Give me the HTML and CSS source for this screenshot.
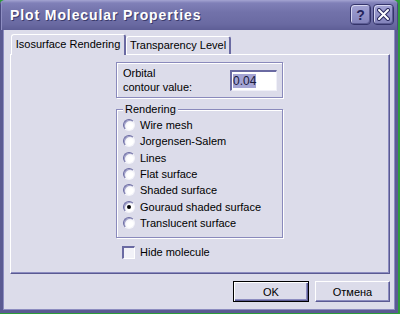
FILE: index.html
```html
<!DOCTYPE html>
<html lang="en">

<head>
    <meta charset="UTF-8">
    <title>Plot Molecular Properties</title>
    <link rel="stylesheet" href="styles.css">
</head>

<body>
    <div class="window">
        <div class="titlebar">
            <span class="title">Plot Molecular Properties</span>
            <div class="title-buttons">
                <span class="tbtn help">?</span>
                <span class="tbtn close">
                    <svg width="13" height="13" viewBox="0 0 13 13">
                        <path d="M2 2 L11 11 M11 2 L2 11" stroke="#2a2a5e" stroke-width="4" stroke-linecap="round" />
                        <path d="M2 2 L11 11 M11 2 L2 11" stroke="#fff" stroke-width="2" stroke-linecap="round" />
                    </svg>
                </span>
            </div>
        </div>

        <div class="client">
            <div class="tabs">
                <div class="tab active">Isosurface Rendering</div>
                <div class="tab">Transparency Level</div>
            </div>

            <div class="panel">
                <div class="orbital">
                    <div class="orbital-label">Orbital<br>contour value:</div>
                    <div class="input"><span class="sel">0.04</span></div>
                </div>

                <fieldset class="rendering">
                    <legend>Rendering</legend>
                    <div class="option"><span class="radio"></span>Wire mesh</div>
                    <div class="option"><span class="radio"></span>Jorgensen-Salem</div>
                    <div class="option"><span class="radio"></span>Lines</div>
                    <div class="option"><span class="radio"></span>Flat surface</div>
                    <div class="option"><span class="radio"></span>Shaded surface</div>
                    <div class="option"><span class="radio checked"></span>Gouraud shaded surface</div>
                    <div class="option"><span class="radio"></span>Translucent surface</div>
                </fieldset>

                <div class="check-row"><span class="checkbox"></span>Hide molecule</div>
            </div>

            <div class="buttons">
                <button class="btn default">OK</button>
                <button class="btn">Отмена</button>
            </div>
        </div>
    </div>
</body>

</html>
```

FILE: styles.css
```css
* {
    margin: 0;
    padding: 0;
    box-sizing: border-box;
}

body {
    background: #2e9c3a;
    font-family: 'Liberation Sans', Arial, sans-serif;
    font-size: 11px;
    color: #000;
}

.window {
    width: 398px;
    height: 313px;
    display: flex;
    flex-direction: column;
    border-radius: 5px 5px 0 0;
    overflow: hidden;
}

/* Title bar */
.titlebar {
    height: 30px;
    flex: none;
    display: flex;
    align-items: flex-start;
    justify-content: space-between;
    padding: 4px 4px 0 10px;
    background: linear-gradient(#a4a4d2 0, #8080b8 3px, #7272aa 40%, #6a6aa2 80%, #5e5e96 100%);
    box-shadow: inset 1px 0 0 #4a4a80, inset 2px 0 0 #8e8ec2, inset -1px 0 0 #4a4a80;
}

.title {
    font-weight: bold;
    font-size: 14px;
    color: #fff;
    line-height: 22px;
    letter-spacing: 0.9px;
    text-shadow: 1px 1px 0 #3a3a6a;
}

.title-buttons {
    display: flex;
    gap: 2px;
}

.tbtn {
    width: 21px;
    height: 21px;
    display: flex;
    align-items: center;
    justify-content: center;
    border: 1px solid #34346a;
    border-radius: 4px;
    background: linear-gradient(#a2a2d4, #8282ba);
    box-shadow: inset 1px 1px 0 #d6d6f0, inset -1px -1px 0 #5c5c94;
}

.help {
    font-weight: bold;
    font-size: 14px;
    color: #24245a;
}

/* Client area */
.client {
    flex: 1;
    background: #dcdcea;
    border: 3px solid #5a5a92;
    border-top: none;
    box-shadow: inset 1px 0 0 #8c8cc0, inset -1px 0 0 #8c8cc0, inset 0 -1px 0 #8c8cc0;
    padding: 4px 5px 0 7px;
}

.tabs {
    display: flex;
    align-items: flex-end;
    height: 21px;
    margin-bottom: -1px;
    position: relative;
    z-index: 1;
}

.tab {
    height: 18px;
    line-height: 17px;
    text-align: center;
    background: #dcdcea;
    border-top: 1px solid #fff;
    border-left: 1px solid #fff;
    border-right: 2px solid #6a6aa2;
    border-radius: 3px 3px 0 0;
    width: 105px;
    margin-bottom: 1px;
}

.tab.active {
    height: 21px;
    width: 115px;
    margin-left: 1px;
    margin-bottom: 0;
    line-height: 19px;
}

.panel {
    height: 220px;
    border-top: 1px solid #fff;
    border-left: 1px solid #fff;
    border-right: 1px solid #5a5a92;
    border-bottom: 1px solid #5a5a92;
    box-shadow: inset -1px -1px 0 #8c8cc0;
    padding: 7px 0 0 105px;
}

/* Orbital contour value */
.orbital {
    width: 167px;
    height: 36px;
    display: flex;
    align-items: center;
    justify-content: space-between;
    padding: 0 5px 0 6px;
    border: 1px solid #8a8abc;
    box-shadow: inset 1px 1px 0 #fff, 1px 1px 0 #fff;
}

.orbital-label {
    line-height: 14px;
}

.input {
    width: 47px;
    height: 21px;
    background: #fff;
    border-top: 2px solid #6a6aa2;
    border-left: 2px solid #6a6aa2;
    border-right: 1px solid #f0f0f8;
    border-bottom: 1px solid #f0f0f8;
    padding: 2px 0 0 1px;
    line-height: 14px;
    font-size: 12px;
}

.sel {
    background: #a4a4d4;
    color: #1a1a3a;
}

/* Rendering group */
.rendering {
    width: 167px;
    height: 136px;
    margin-top: 4px;
    padding: 1px 0 5px 6px;
    border: 1px solid #8a8abc;
    box-shadow: inset 1px 1px 0 #fff, 1px 1px 0 #fff;
}

.rendering legend {
    padding: 0 2px;
    line-height: 14px;
    background: #dcdcea;
}

.option {
    height: 16.33px;
    display: flex;
    align-items: center;
}

.radio {
    width: 12px;
    height: 12px;
    margin-right: 5px;
    border-radius: 50%;
    border: 1px solid;
    border-color: #6a6aa2 #f4f4fa #f4f4fa #6a6aa2;
    background: radial-gradient(circle at 65% 65%, #ffffff 30%, #e2e2ee 100%);
    box-shadow: inset 1px 1px 0 #a0a0c8;
    display: flex;
    align-items: center;
    justify-content: center;
}

.radio.checked::after {
    content: "";
    width: 4px;
    height: 4px;
    border-radius: 50%;
    background: #000;
}

.check-row {
    display: flex;
    align-items: center;
    height: 16px;
    margin: 6px 0 0 6px;
}

.checkbox {
    width: 13px;
    height: 13px;
    margin-right: 5px;
    border-top: 2px solid #6a6aa2;
    border-left: 2px solid #6a6aa2;
    border-right: 1px solid #fff;
    border-bottom: 1px solid #fff;
    background: #f2f2f8;
}

/* Dialog buttons */
.buttons {
    display: flex;
    justify-content: flex-end;
    gap: 6px;
    margin-top: 7px;
}

.btn {
    width: 75px;
    height: 21px;
    font-family: 'Liberation Sans', Arial, sans-serif;
    font-size: 11px;
    background: #dcdcea;
    border: 1px solid;
    border-color: #fff #5a5a92 #5a5a92 #fff;
    box-shadow: inset -1px -1px 0 #8c8cc0;
}

.btn.default {
    width: 76px;
    border: 1px solid #000;
    box-shadow: inset 1px 1px 0 #fff, inset -1px -1px 0 #5a5a92, inset -2px -2px 0 #8c8cc0;
}
```
